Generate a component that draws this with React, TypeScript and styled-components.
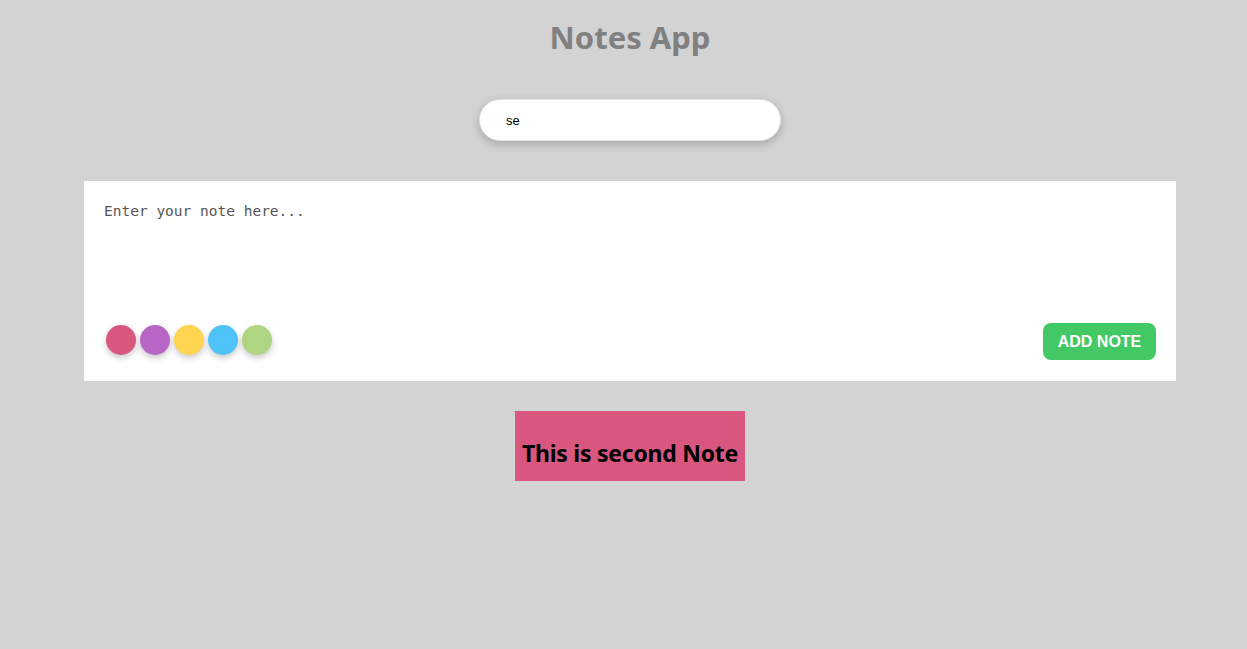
import React, { useState } from "react";
import styled, { createGlobalStyle } from "styled-components";

const Global = createGlobalStyle`
  html, body { margin: 0; padding: 0; background: #d3d3d3; }
  body { font-family: "Noto Sans", "Open Sans", sans-serif; }
`;

const Page = styled.div`
  display: flex;
  flex-direction: column;
  align-items: center;
  min-height: 649px;
  box-sizing: border-box;
  padding-left: 13px;
  background: #d3d3d3;
`;

const Title = styled.h1`
  margin: 16px 0 0;
  font-family: "Noto Sans", sans-serif;
  font-size: 31px;
  font-weight: 700;
  color: #808080;
  line-height: 42px;
`;

const Search = styled.input`
  margin-top: 41px;
  width: 302px;
  height: 42px;
  box-sizing: border-box;
  border: 1px solid #e2e2e2;
  border-radius: 21px;
  padding: 0 26px;
  font-family: "Liberation Sans", Arial, sans-serif;
  font-size: 13px;
  color: #000;
  background: #fff;
  box-shadow: 0 3px 10px rgba(0, 0, 0, 0.22);
  outline: none;
`;

const Form = styled.div`
  margin-top: 40px;
  align-self: stretch;
  margin-left: 71px;
  margin-right: 71px;
  height: 200px;
  background: #fff;
  display: flex;
  flex-direction: column;
  box-sizing: border-box;
  padding: 20px 20px 21px 20px;
`;

const NoteArea = styled.textarea`
  flex: 1;
  border: none;
  outline: none;
  resize: none;
  padding: 0;
  margin: 0;
  font-family: "DejaVu Sans Mono", "Liberation Mono", monospace;
  font-size: 14.5px;
  line-height: 20px;
  color: #333;
  &::placeholder { color: #555; }
`;

const Bottom = styled.div`
  display: flex;
  justify-content: space-between;
  align-items: center;
`;

const Colors = styled.div`
  display: flex;
  gap: 4px;
  padding-left: 2px;
  margin-bottom: 3px;
`;

const Dot = styled.span<{ $c: string }>`
  width: 30px;
  height: 30px;
  border-radius: 50%;
  background: ${(p) => p.$c};
  box-shadow: 0 3px 6px rgba(0, 0, 0, 0.22);
  cursor: pointer;
`;

const AddButton = styled.button`
  width: 113px;
  height: 37px;
  border: none;
  border-radius: 8px;
  background: #43c866;
  color: #fff;
  font-family: "Liberation Sans", Arial, sans-serif;
  font-weight: 700;
  font-size: 16px;
  cursor: pointer;
`;

const Notes = styled.div`
  margin-top: 30px;
  display: flex;
  gap: 20px;
  justify-content: center;
`;

const Card = styled.div<{ $c: string }>`
  width: 230px;
  height: 70px;
  box-sizing: border-box;
  background: ${(p) => p.$c};
  display: flex;
  align-items: flex-end;
  justify-content: center;
  padding-bottom: 15px;
`;

const CardText = styled.h2`
  margin: 0;
  font-family: "Noto Sans", sans-serif;
  font-size: 23px;
  font-weight: 700;
  letter-spacing: -0.25px;
  color: #000;
  line-height: 26px;
  white-space: nowrap;
`;

const colors = ["#d9577f", "#b766c5", "#ffd54f", "#4fc3f7", "#aed581"];

export default function App() {
  const [q, setQ] = useState("se");
  return (
    <Page>
      <Global />
      <Title>Notes App</Title>
      <Search value={q} onChange={(e) => setQ(e.target.value)} autoFocus />
      <Form>
        <NoteArea placeholder="Enter your note here..." />
        <Bottom>
          <Colors>
            {colors.map((c) => (
              <Dot key={c} $c={c} />
            ))}
          </Colors>
          <AddButton>ADD NOTE</AddButton>
        </Bottom>
      </Form>
      <Notes>
        <Card $c="#d9577f">
          <CardText>This is second Note</CardText>
        </Card>
      </Notes>
    </Page>
  );
}
